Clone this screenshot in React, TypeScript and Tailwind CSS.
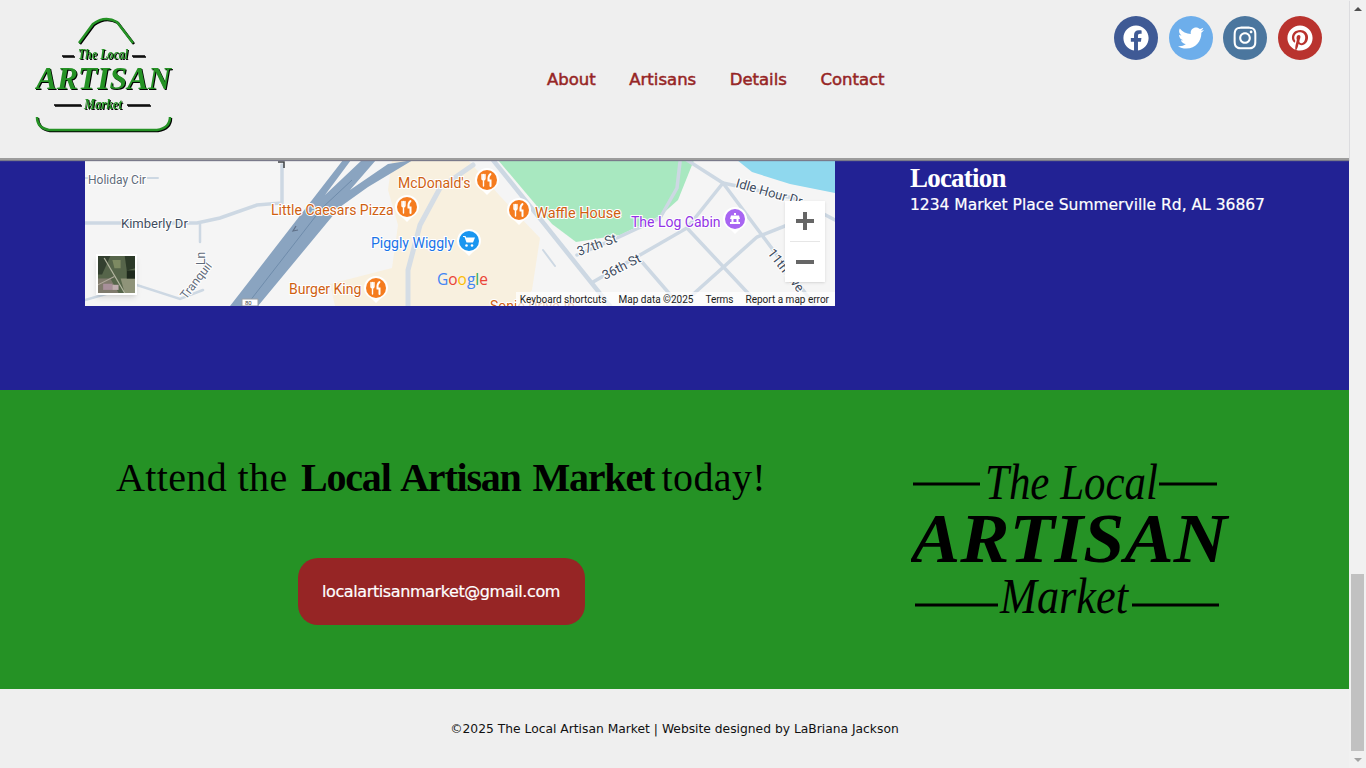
import React from 'react';
import { FaFacebook, FaTwitter, FaInstagram, FaPinterest } from 'react-icons/fa';

const navLinks = ['About', 'Artisans', 'Details', 'Contact'];

const socials = [
  { icon: FaFacebook, bg: 'bg-[#3f5a95]', size: 'text-[26px]' },
  { icon: FaTwitter, bg: 'bg-[#6daeeb]', size: 'text-[26px]' },
  { icon: FaInstagram, bg: 'bg-[#4b769e]', size: 'text-[26px]' },
  { icon: FaPinterest, bg: 'bg-[#b9332e]', size: 'text-[26px]' },
];

const Pin = ({ x, y, color, kind }: { x: number; y: number; color: string; kind: 'food' | 'cart' | 'store' }) => (
  <g transform={`translate(${x} ${y})`}>
    <path d="M-12 0a12 12 0 0 1 24 0c0 6-5 9-8 11l-4 4-4-4c-3-2-8-5-8-11z" fill="#fff" />
    <circle r="10" fill={color} />
    {kind === 'food' && (
      <g stroke="#fff" fill="none" strokeLinecap="round">
        <path d="M-5-5.500v4q0 1.500 1.500 1.500t1.500-1.500v-4M-3.500-5.500V6" strokeWidth="1.400" />
        <path d="M3.500-6q-2.500 2-2 6.500h2V6" strokeWidth="2" />
      </g>
    )}
    {kind === 'cart' && (
      <g fill="#fff">
        <path d="M-6-5h2.500l.6 1.600H6L4 1.500h-6.500L-4.500-4H-6z" />
        <circle cx="-2.500" cy="4.500" r="1.300" />
        <circle cx="3" cy="4.500" r="1.300" />
      </g>
    )}
    {kind === 'store' && (
      <g fill="#fff">
        <path d="M-1-6h2v2h-2zM-4-3.500h8L5 0H3.500v3H5v2H-5V3h1.500V0H-5z" />
        <rect x="-1.500" y="0" width="3" height="3" fill={color} />
      </g>
    )}
  </g>
);

const Label = ({ x, y, size = 14, fill, rotate, children }: { x: number; y: number; size?: number; fill: string; rotate?: number; children: React.ReactNode }) => (
  <text
    x={x}
    y={y}
    fontSize={size}
    fill={fill}
    fontFamily="Roboto, sans-serif"
    stroke="#fff"
    strokeWidth="2"
    paintOrder="stroke"
    transform={rotate ? `rotate(${rotate} ${x} ${y})` : undefined}
  >
    {children}
  </text>
);

const MapDrawing = () => (
  <svg viewBox="85 160 750 146" className="block w-full h-full">
    <rect x="85" y="160" width="750" height="146" fill="#f5f5f5" />
    <path d="M392 160H468L500 196 540 238 532 290 520 306H335L330 284 392 268 398 225 388 190z" fill="#f8f0df" />
    <path d="M498 160H694L678 200 660 216 620 235 576 242 552 224z" fill="#a8e8c0" />
    <path d="M737 160H835V193L790 184 752 172z" fill="#8fd8ee" />

    <g fill="none" stroke="#cdd8e3" strokeLinecap="round">
      <path d="M85 223H197L220 218 257 205 282 203V165" strokeWidth="3.500" />
      <path d="M200 224V242M203 290L180 299 137 285 85 300" strokeWidth="2.500" />
      <path d="M85 178H90M147 178H158" strokeWidth="2" />
      <path d="M473 165L440 188 420 225 408 270V306" strokeWidth="5" stroke="#d5dde5" />
      <path d="M493 160L610 306" strokeWidth="4.500" />
      <path d="M577 255L617 238 660 218 677 188 680 162" strokeWidth="3.500" />
      <path d="M687 160L723 183 793 198 835 220" strokeWidth="3.500" />
      <path d="M723 183L687 228 593 282" strokeWidth="3.500" />
      <path d="M687 228L760 306M723 183L815 306M642 262L680 306" strokeWidth="3.500" />
      <path d="M680 306L757 237 800 220" strokeWidth="3.500" />
      <path d="M543 250L555 266" strokeWidth="2" />
    </g>

    <path d="M230 306L343 160H351L325 195 362 160H376L350 190 388 164 413 160 368 187 340 207 258 306z" fill="#8aa4c0" />
    <path d="M246 306L322 208 352 180" stroke="#6f8cab" strokeWidth="1" fill="none" />
    <path d="M296 226l-3 5 5-1" stroke="#5f7088" strokeWidth="1.200" fill="none" />
    <path d="M278 162h6v6" stroke="#3c4043" strokeWidth="1.500" fill="none" />
    <path d="M242 299h16v7h-16z" fill="#fff" stroke="#9aa0a6" />
    <text x="245" y="305" fontSize="6" fill="#444" fontFamily="Roboto, sans-serif">80</text>

    <Label x={88} y={184} size={12} fill="#5f6b7a">Holiday Cir</Label>
    <Label x={121} y={228} size={13} fill="#3f4d60">Kimberly Dr</Label>
    <Label x={186} y={300} size={12} fill="#5f6b7a" rotate={-52}>Tranquil</Label>
    <Label x={205} y={265} size={12} fill="#5f6b7a" rotate={-90}>Ln</Label>
    <Label x={579} y={256} size={13} fill="#3f4d60" rotate={-20}>37th St</Label>
    <Label x={605} y={280} size={13} fill="#3f4d60" rotate={-27}>36th St</Label>
    <Label x={735} y={187} size={13} fill="#3f4d60" rotate={16}>Idle Hour Dr</Label>
    <Label x={767} y={253} size={13} fill="#3f4d60" rotate={52}>11th Ave</Label>

    <Label x={398} y={188} fill="#cf5f12">McDonald's</Label>
    <Label x={271} y={215} fill="#cf5f12">Little Caesars Pizza</Label>
    <Label x={535} y={218} size={14.500} fill="#cf5f12">Waffle House</Label>
    <Label x={289} y={294} fill="#cf5f12">Burger King</Label>
    <Label x={371} y={248} fill="#1a73e8">Piggly Wiggly</Label>
    <Label x={631} y={227} fill="#9334e6">The Log Cabin</Label>
    <Label x={490} y={311} fill="#cf5f12">Sonic Drive-In</Label>

    <Pin x={487} y={180} color="#f57c1f" kind="food" />
    <Pin x={407} y={207} color="#f57c1f" kind="food" />
    <Pin x={519} y={210} color="#f57c1f" kind="food" />
    <Pin x={376} y={288} color="#f57c1f" kind="food" />
    <Pin x={469} y={241} color="#1a96f0" kind="cart" />
    <Pin x={735} y={219} color="#a865f2" kind="store" />
    <circle cx="561" cy="155" r="6" fill="#fff" />

    <text x="437" y="285" fontSize="15.500" fontFamily="'Open Sans', sans-serif" fontWeight="500">
      <tspan fill="#4285f4">G</tspan>
      <tspan fill="#ea4335">o</tspan>
      <tspan fill="#fbbc05">o</tspan>
      <tspan fill="#4285f4">g</tspan>
      <tspan fill="#34a853">l</tspan>
      <tspan fill="#ea4335">e</tspan>
    </text>
  </svg>
);

const SatelliteThumb = () => (
  <svg viewBox="0 0 36 36" className="block w-full h-full">
    <rect width="36" height="36" fill="#56654a" />
    <path d="M0 0h12L4 18H0z" fill="#33402f" />
    <path d="M26 0h10v12l-8 2z" fill="#2c3a28" />
    <path d="M14 4h8v8h-6z" fill="#7d8a62" />
    <path d="M0 22h12l8 14H0z" fill="#7f7a6c" />
    <path d="M22 22h14v14H26z" fill="#8f9379" />
    <path d="M28 14h8v8h-8z" fill="#1f2a1d" />
    <path d="M6 2l20 34" stroke="#b3b6a0" strokeWidth="1.200" />
    <path d="M0 28l16-8" stroke="#b0a89c" strokeWidth="1" />
    <path d="M5 27h9v6H5z" fill="#a8909a" />
    <path d="M14 28h6v5h-6z" fill="#c0aeb0" />
  </svg>
);

const Logo = ({ big }: { big?: boolean }) =>
  big ? (
    <svg viewBox="0 0 320 170" className="block w-[320px] h-[170px]">
      <g stroke="#000" strokeWidth="3" fill="none">
        <path d="M2 29H69M248 29H306M4 150H87M221 150H308" />
      </g>
      <g fill="#000" fontFamily="'Liberation Serif', serif" fontStyle="italic">
        <text x="74" y="44" fontSize="50" textLength="173" lengthAdjust="spacingAndGlyphs">The Local</text>
        <text x="0" y="107" fontSize="70" fontWeight="700" textLength="316" lengthAdjust="spacingAndGlyphs">ARTISAN</text>
        <text x="89" y="158" fontSize="50" textLength="128" lengthAdjust="spacingAndGlyphs">Market</text>
      </g>
    </svg>
  ) : (
    <svg viewBox="0 0 140 118" className="block w-[140px] h-[118px] drop-shadow-[1px_1px_0_#000]">
      <g fill="none" stroke="#259225" strokeWidth="2.500">
        <path d="M44 27L58 8Q70-1 82 6L98 27" />
        <path d="M2 101Q2 112 14 114H122Q135 112 135 101" />
      </g>
      <path d="M27 40H39M97 40H110M19 89H46M92 89H115" stroke="#000" strokeWidth="1.500" />
      <g fill="#259225" fontFamily="'Liberation Serif', serif" fontStyle="italic" fontWeight="700">
        <text x="43" y="43" fontSize="15" textLength="50" lengthAdjust="spacingAndGlyphs">The Local</text>
        <text x="1" y="73" fontSize="31" textLength="135" lengthAdjust="spacingAndGlyphs">ARTISAN</text>
        <text x="49" y="93" fontSize="15" textLength="38" lengthAdjust="spacingAndGlyphs">Market</text>
      </g>
    </svg>
  );

const App: React.FC = () => {
  return (
    <div className="flex h-screen w-full overflow-hidden bg-[#efefef] font-['DejaVu_Sans',sans-serif]">
      <div className="w-[1349px] shrink-0 flex flex-col">
        {/* Header */}
        <header className="h-[160px] shrink-0 bg-[#efefef] border-b-2 border-[#9c9c9c] shadow-[0_1px_1px_#7a7a8a] flex relative z-10">
          <div className="w-[35px] shrink-0" />
          <div className="pt-[16px] w-[512px] shrink-0">
            <Logo />
          </div>
          <nav className="flex gap-[33.500px] pt-[69px] h-fit">
            {navLinks.map(link => (
              <a key={link} className="text-[16.500px] leading-[22px] text-[#962525] [-webkit-text-stroke:0.5px_#962525]">{link}</a>
            ))}
          </nav>
          <div className="ml-auto mr-[27px] flex gap-[10.700px] pt-[16px] h-fit">
            {socials.map((s, i) => (
              <div key={i} className={`w-[44px] h-[44px] rounded-full flex items-center justify-center text-white ${s.bg} ${s.size}`}>
                <s.icon />
              </div>
            ))}
          </div>
        </header>

        {/* Map + location */}
        <section className="h-[230px] shrink-0 bg-[#222294] flex pl-[85px]">
          <div className="w-[750px] h-[146px] shrink-0 relative overflow-hidden">
            <MapDrawing />
            <div className="absolute left-[11px] top-[94px] w-[41px] h-[41px] border-2 border-white shadow-md">
              <SatelliteThumb />
            </div>
            <div className="absolute left-[700px] top-[41px] w-[40px] h-[81px] bg-white shadow-sm flex flex-col items-center">
              <div className="h-[40px] flex items-center justify-center text-[#666]">
                <svg width="18" height="18" viewBox="0 0 18 18"><path d="M7 0h4v7h7v4h-7v7H7v-7H0V7h7z" fill="#666" /></svg>
              </div>
              <div className="w-[30px] h-px bg-[#e6e6e6]" />
              <div className="h-[40px] flex items-center justify-center">
                <div className="w-[18px] h-[4px] bg-[#666]" />
              </div>
            </div>
            <div className="absolute right-0 bottom-0 h-[14px] flex items-center gap-[12px] pl-[4px] pr-[6px] bg-white/70 text-[10px] text-[#222] font-['Roboto',sans-serif] whitespace-nowrap">
              <span>Keyboard shortcuts</span>
              <span>Map data ©2025</span>
              <span>Terms</span>
              <span>Report a map error</span>
            </div>
          </div>
          <div className="ml-[75px] text-white">
            <h3 className="font-['Liberation_Serif',serif] font-bold text-[27px] leading-[36px] tracking-[-0.8px]">Location</h3>
            <p className="text-[15.500px] leading-[16px] mt-[1px] [-webkit-text-stroke:0.2px_#fff]">1234 Market Place Summerville Rd, AL 36867</p>
          </div>
        </section>

        {/* Call to action */}
        <section className="h-[299px] shrink-0 bg-[#259225] flex">
          <div className="w-[882px] shrink-0 flex flex-col items-center pt-[64px]">
            <h2 className="font-['Liberation_Serif',serif] text-[40px] leading-[48px] tracking-[0.4px] text-black whitespace-nowrap">
              Attend the <strong className="font-bold tracking-[-1.2px] [word-spacing:3px] ml-[3px] -mr-[3px]">Local Artisan Market</strong> today!
            </h2>
            <a className="mt-[56px] w-[287px] h-[67px] rounded-[20px] bg-[#962525] text-white flex items-center justify-center text-[16px] tracking-[-0.4px] [-webkit-text-stroke:0.2px_#fff]">
              localartisanmarket@gmail.com
            </a>
          </div>
          <div className="ml-[29px] pt-[65px]">
            <Logo big />
          </div>
        </section>

        {/* Footer */}
        <footer className="flex-1 bg-[#efefef] flex items-center justify-center pt-[1px] text-[12.300px] text-[#111]">
          ©2025 The Local Artisan Market | Website designed by LaBriana Jackson
        </footer>
      </div>

      {/* Browser scrollbar */}
      <div className="w-[17px] shrink-0 bg-[#f1f1f1] flex flex-col items-center">
        <div className="h-[17px] flex items-center justify-center">
          <div className="w-0 h-0 border-x-[4px] border-x-transparent border-b-[4px] border-b-[#505050]" />
        </div>
        <div className="flex-1 w-[13px] flex flex-col justify-end">
          <div className="h-[177px] bg-[#c1c1c1]" />
        </div>
        <div className="h-[17px] flex items-center justify-center">
          <div className="w-0 h-0 border-x-[4px] border-x-transparent border-t-[4px] border-t-[#a3a3a3]" />
        </div>
      </div>
    </div>
  );
};

export default App;
